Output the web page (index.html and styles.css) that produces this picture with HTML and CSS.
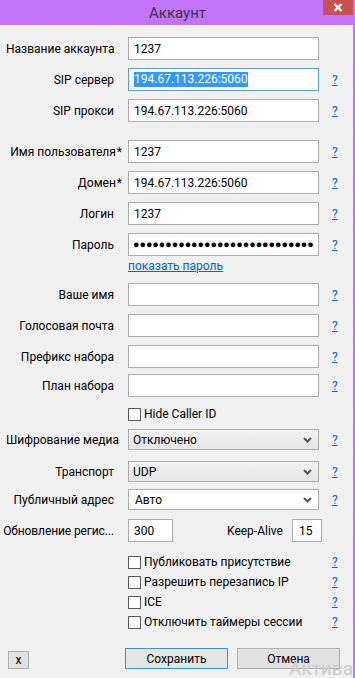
FILE: index.html
```html
<!DOCTYPE html>
<html lang="ru">
<head>
<meta charset="utf-8">
<title>Аккаунт</title>
<link rel="stylesheet" href="styles.css">
</head>
<body>
<div class="window">
  <div class="titlebar">
    <span class="title">Аккаунт</span>
    <div class="close">
      <svg width="10" height="9" viewBox="0 0 10 9"><path d="M1.5 1 L8.5 8 M8.5 1 L1.5 8" stroke="#fff" stroke-width="2.2" fill="none"/></svg>
    </div>
  </div>
  <div class="content">
    <div class="row first">
      <span class="lbl">Название аккаунта</span>
      <div class="field">1237</div>
    </div>
    <div class="row">
      <span class="lbl">SIP сервер</span>
      <div class="field focus"><span class="sel">194.67.113.226:5060</span></div>
      <a class="help">?</a>
    </div>
    <div class="row">
      <span class="lbl">SIP прокси</span>
      <div class="field">194.67.113.226:5060</div>
      <a class="help">?</a>
    </div>

    <div class="row group">
      <span class="lbl">Имя пользователя<span class="req">*</span></span>
      <div class="field">1237</div>
      <a class="help">?</a>
    </div>
    <div class="row">
      <span class="lbl">Домен<span class="req">*</span></span>
      <div class="field">194.67.113.226:5060</div>
      <a class="help">?</a>
    </div>
    <div class="row">
      <span class="lbl">Логин</span>
      <div class="field">1237</div>
      <a class="help">?</a>
    </div>
    <div class="row">
      <span class="lbl">Пароль</span>
      <div class="field pw">●●●●●●●●●●●●●●●●●●●●●●●●●●●●</div>
      <a class="help">?</a>
    </div>
    <div class="linkrow"><a class="link">показать пароль</a></div>

    <div class="row after-link">
      <span class="lbl">Ваше имя</span>
      <div class="field"></div>
      <a class="help">?</a>
    </div>
    <div class="row">
      <span class="lbl">Голосовая почта</span>
      <div class="field"></div>
      <a class="help">?</a>
    </div>
    <div class="row">
      <span class="lbl">Префикс набора</span>
      <div class="field"></div>
      <a class="help">?</a>
    </div>
    <div class="row tight">
      <span class="lbl">План набора</span>
      <div class="field"></div>
      <a class="help">?</a>
    </div>
    <div class="checkrow single">
      <span class="box"></span><span class="ctext">Hide Caller ID</span>
    </div>

    <div class="row combo-row c1">
      <span class="lbl">Шифрование медиа</span>
      <div class="combo">Отключено<svg class="chev" width="9" height="6" viewBox="0 0 9 6"><path d="M1 1 L4.5 4.5 L8 1" stroke="#555" stroke-width="2" fill="none"/></svg></div>
      <a class="help">?</a>
    </div>
    <div class="row combo-row c2">
      <span class="lbl">Транспорт</span>
      <div class="combo">UDP<svg class="chev" width="9" height="6" viewBox="0 0 9 6"><path d="M1 1 L4.5 4.5 L8 1" stroke="#555" stroke-width="2" fill="none"/></svg></div>
      <a class="help">?</a>
    </div>
    <div class="row combo-row c3">
      <span class="lbl">Публичный адрес</span>
      <div class="combo edit">Авто<svg class="chev" width="9" height="6" viewBox="0 0 9 6"><path d="M1 1 L4.5 4.5 L8 1" stroke="#555" stroke-width="2" fill="none"/></svg></div>
      <a class="help">?</a>
    </div>
    <div class="row refresh">
      <span class="lbl short">Обновление регис...</span>
      <div class="field small">300</div>
      <span class="ka-label">Keep-Alive</span>
      <div class="field tiny">15</div>
    </div>

    <div class="checks">
      <div class="checkrow"><span class="box"></span><span class="ctext">Публиковать присутствие</span><a class="help">?</a></div>
      <div class="checkrow"><span class="box"></span><span class="ctext">Разрешить перезапись IP</span><a class="help">?</a></div>
      <div class="checkrow"><span class="box"></span><span class="ctext">ICE</span><a class="help">?</a></div>
      <div class="checkrow"><span class="box"></span><span class="ctext">Отключить таймеры сессии</span><a class="help">?</a></div>
    </div>

    <div class="buttons">
      <div class="btn xbtn">x</div>
      <div class="btn save">Сохранить</div>
      <div class="btn cancel">Отмена</div>
    </div>

    <div class="watermark">Активация Windows</div>
  </div>
</div>
</body>
</html>
```

FILE: styles.css
```css
html, body {
  margin: 0;
  padding: 0;
}
body {
  background: #c274fc;
  font-family: Roboto, "Noto Sans", "Liberation Sans", sans-serif;
  font-size: 12px;
  color: #000;
}
.window {
  width: 355px;
  height: 678px;
  display: flex;
  flex-direction: column;
  background: #c274fc;
  overflow: hidden;
}
.titlebar {
  height: 25px;
  flex: none;
  position: relative;
  display: flex;
  align-items: center;
  justify-content: center;
}
.title {
  font-size: 15px;
  color: #3b3340;
}
.close {
  position: absolute;
  top: 0;
  right: 2px;
  width: 30px;
  height: 15px;
  background: #c75050;
  display: flex;
  align-items: center;
  justify-content: center;
}
.content {
  flex: 1;
  background: #f0f0f0;
  margin-right: 2px;
  padding-top: 12px;
  position: relative;
  overflow: hidden;
  display: flex;
  flex-direction: column;
}
.row {
  display: flex;
  align-items: center;
  height: 23px;
  margin-top: 8px;
  flex: none;
}
.row.first { margin-top: 0; }
.row.group { margin-top: 18px; }
.row.after-link { margin-top: 10px; }
.row.tight { margin-top: 6px; }
.lbl {
  width: 114px;
  box-sizing: border-box;
  padding-left: 6px;
  margin-right: 14px;
  text-align: right;
  white-space: nowrap;
  flex: none;
}
.lbl.short {
  padding-left: 0;
  letter-spacing: -0.1px;
}
.lbl .req {
  margin-right: -8px;
  padding-left: 1px;
}
.field {
  width: 191px;
  height: 23px;
  box-sizing: border-box;
  border: 1px solid #acacac;
  background: #fff;
  padding-left: 5px;
  display: flex;
  align-items: center;
  white-space: nowrap;
  overflow: hidden;
  flex: none;
}
.field.focus {
  border-color: #5a9ee4;
}
.sel {
  background: #3399ff;
  color: #fff;
  line-height: 15px;
}
.field.pw {
  font-size: 10.7px;
  letter-spacing: 0;
  padding-left: 4px;
}
.field.small {
  width: 45px;
}
.field.tiny {
  width: 30px;
  padding-left: 6px;
}
.ka-label {
  margin-left: 54px;
  margin-right: 9px;
}
.help {
  margin-left: 13px;
  color: #0066cc;
  text-decoration: underline;
}
.linkrow {
  margin-top: 3px;
  height: 14px;
  padding-left: 128px;
  display: flex;
  align-items: center;
  flex: none;
}
.link {
  color: #0066cc;
  text-decoration: underline;
}
.checkrow {
  display: flex;
  align-items: center;
  height: 20px;
  padding-left: 128px;
  flex: none;
}
.checkrow.single {
  margin-top: 8px;
  height: 18px;
}
.box {
  width: 13px;
  height: 13px;
  box-sizing: border-box;
  border: 1px solid #5a5a5a;
  background: #fff;
  flex: none;
}
.ctext {
  margin-left: 3px;
  width: 174px;
  white-space: nowrap;
}
.checkrow .help {
  margin-left: 14px;
}
.combo-row {
  height: 21px;
}
.combo-row.c1 { margin-top: 6px; }
.combo-row.c2 { margin-top: 11px; }
.combo-row.c3 { margin-top: 7px; }
.row.refresh { margin-top: 9px; }
.combo {
  width: 191px;
  height: 21px;
  box-sizing: border-box;
  border: 1px solid #acacac;
  background: linear-gradient(#f2f2f2, #e5e5e5);
  padding-left: 4px;
  display: flex;
  align-items: center;
  position: relative;
  flex: none;
}
.combo.edit {
  background: #fff;
  padding-left: 6px;
}
.chev {
  position: absolute;
  right: 6px;
  top: 7px;
}
.checks {
  margin-top: 10px;
  display: flex;
  flex-direction: column;
}
.buttons {
  display: flex;
  align-items: flex-end;
  margin-top: 16px;
  padding-left: 8px;
  flex: none;
}
.btn {
  box-sizing: border-box;
  border: 1px solid #adadad;
  background: #e1e1e1;
  display: flex;
  align-items: center;
  justify-content: center;
  flex: none;
}
.xbtn {
  width: 21px;
  height: 18px;
}
.save {
  width: 103px;
  height: 21px;
  margin-left: 96px;
  border-color: #3c8fe0;
  background: #e5e5e5;
}
.cancel {
  width: 103px;
  height: 21px;
  margin-left: 9px;
}
.watermark {
  position: absolute;
  left: 289px;
  top: 632px;
  font-size: 19px;
  color: #cbcbcb;
  white-space: nowrap;
}
```
